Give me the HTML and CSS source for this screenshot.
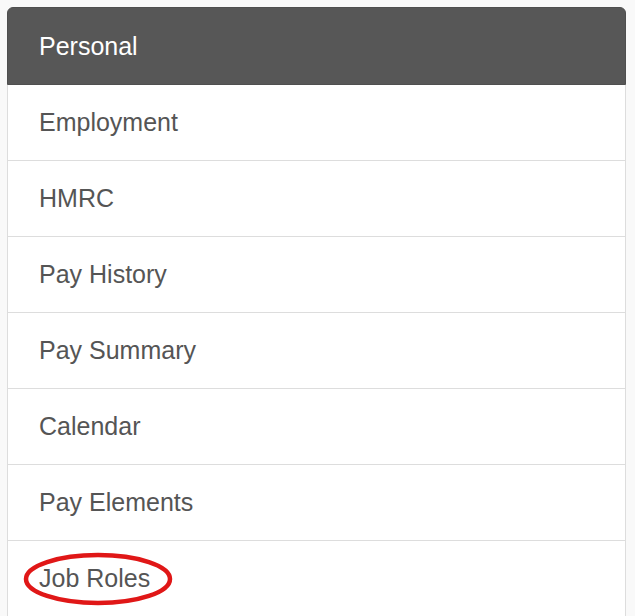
FILE: index.html
```html
<!DOCTYPE html>
<html lang="en">
<head>
    <meta charset="UTF-8">
    <title>Employee Menu</title>
    <link rel="stylesheet" href="styles.css">
</head>
<body>
    <div class="list-group">
        <div class="list-item list-header">Personal</div>
        <div class="list-item">Employment</div>
        <div class="list-item">HMRC</div>
        <div class="list-item">Pay History</div>
        <div class="list-item">Pay Summary</div>
        <div class="list-item">Calendar</div>
        <div class="list-item">Pay Elements</div>
        <div class="list-item highlighted">
            Job Roles
            <svg class="circle-mark" width="160" height="60" viewBox="0 0 160 60">
                <ellipse cx="80" cy="30" rx="72" ry="24" fill="none" stroke="#e01717" stroke-width="4.5"/>
            </svg>
        </div>
    </div>
</body>
</html>
```

FILE: styles.css
```css
body {
    margin: 0;
    padding: 7px 9px 0 7px;
    background-color: #f9f9f9;
    font-family: "Liberation Sans", Arial, sans-serif;
    overflow: hidden;
}

.list-group {
    display: flex;
    flex-direction: column;
    background-color: #fff;
    border-radius: 6px 6px 0 0;
}

.list-item {
    height: 75px;
    line-height: 74px;
    padding: 0 31px;
    font-size: 25px;
    color: #555;
    border: 1px solid #ddd;
    border-top: none;
}

.list-header {
    height: 76px;
    line-height: 76px;
    background-color: #575757;
    color: #fff;
    border: 1px solid #4f4f4f;
    border-radius: 6px 6px 0 0;
}

.highlighted {
    position: relative;
}

.circle-mark {
    position: absolute;
    left: 10px;
    top: 8px;
}
```
